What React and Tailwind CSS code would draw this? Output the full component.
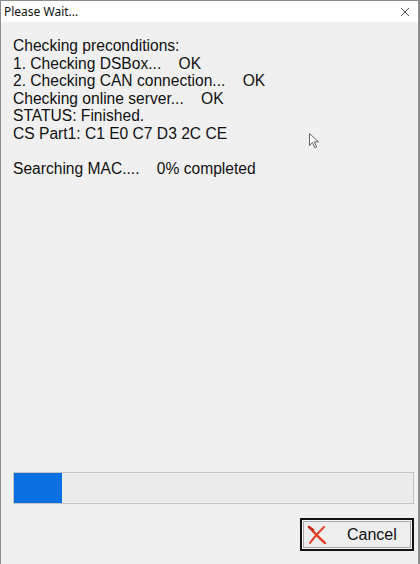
export default function App() {
  const lines = [
    "Checking preconditions:",
    "1. Checking DSBox...    OK",
    "2. Checking CAN connection...    OK",
    "Checking online server...    OK",
    "STATUS: Finished.",
    "CS Part1: C1 E0 C7 D3 2C CE",
    " ",
    "Searching MAC....    0% completed",
  ];
  return (
    <div className="relative w-[420px] h-[564px] flex flex-col bg-[#f0f0f0] border-l border-t border-r-2 border-[#8c8c8c] font-['Liberation_Sans',Arial,sans-serif] text-black overflow-hidden">
      <div className="h-[21px] bg-white flex items-center justify-between pl-[3px] pr-[8px] shrink-0">
        <span className="text-[12px] font-['Noto_Sans',sans-serif] text-[#111] leading-none">Please Wait...</span>
        <svg width="10" height="10" viewBox="0 0 10 10" className="mt-[1px]">
          <path d="M1 1 L9 9 M9 1 L1 9" stroke="#555" strokeWidth="1" fill="none" />
        </svg>
      </div>
      <div className="flex-1 flex flex-col pl-[12px] pr-[4px] pt-[15px] pb-[13px]">
        <div className="text-[15.6px] leading-[17.6px] whitespace-pre text-[#111]">
          {lines.map((l, i) => (
            <div key={i}>{l}</div>
          ))}
        </div>
        <div className="flex-1" />
        <div className="h-[32px] border border-[#c4c4c4] bg-[#ebebeb] flex">
          <div className="w-[48px] h-full bg-[#0a6fe0]" />
        </div>
        <div className="flex justify-end mt-[14px]">
          <div className="w-[114px] h-[33px] border-2 border-[#111] p-[1px] bg-[#f8f8f8]">
            <div className="w-full h-full border border-[#a6a6a6] bg-[#eeeeee] flex items-center pl-[3px]">
              <svg width="22" height="22" viewBox="0 0 22 22">
                <path d="M2 3 C6 7 11 13 18 19" stroke="#e2402a" strokeWidth="2.4" fill="none" strokeLinecap="round" />
                <path d="M17 3 C13 7 8 12 3 19" stroke="#e2402a" strokeWidth="2" fill="none" strokeLinecap="round" />
                <path d="M2 3 L6 6" stroke="#c42a18" strokeWidth="2.6" strokeLinecap="round" />
              </svg>
              <span className="ml-[18px] text-[16px] text-[#111] leading-none">Cancel</span>
            </div>
          </div>
        </div>
      </div>
      <svg className="absolute left-[308px] top-[132px]" width="12" height="17" viewBox="0 0 12 17">
        <path d="M0.5 0.5 L0.5 12.5 L3.5 9.5 L5.8 14.8 L7.6 14 L5.4 8.8 L9.5 8.8 Z" fill="#fafafa" stroke="#666" strokeWidth="1" strokeLinejoin="round" />
      </svg>
    </div>
  );
}
